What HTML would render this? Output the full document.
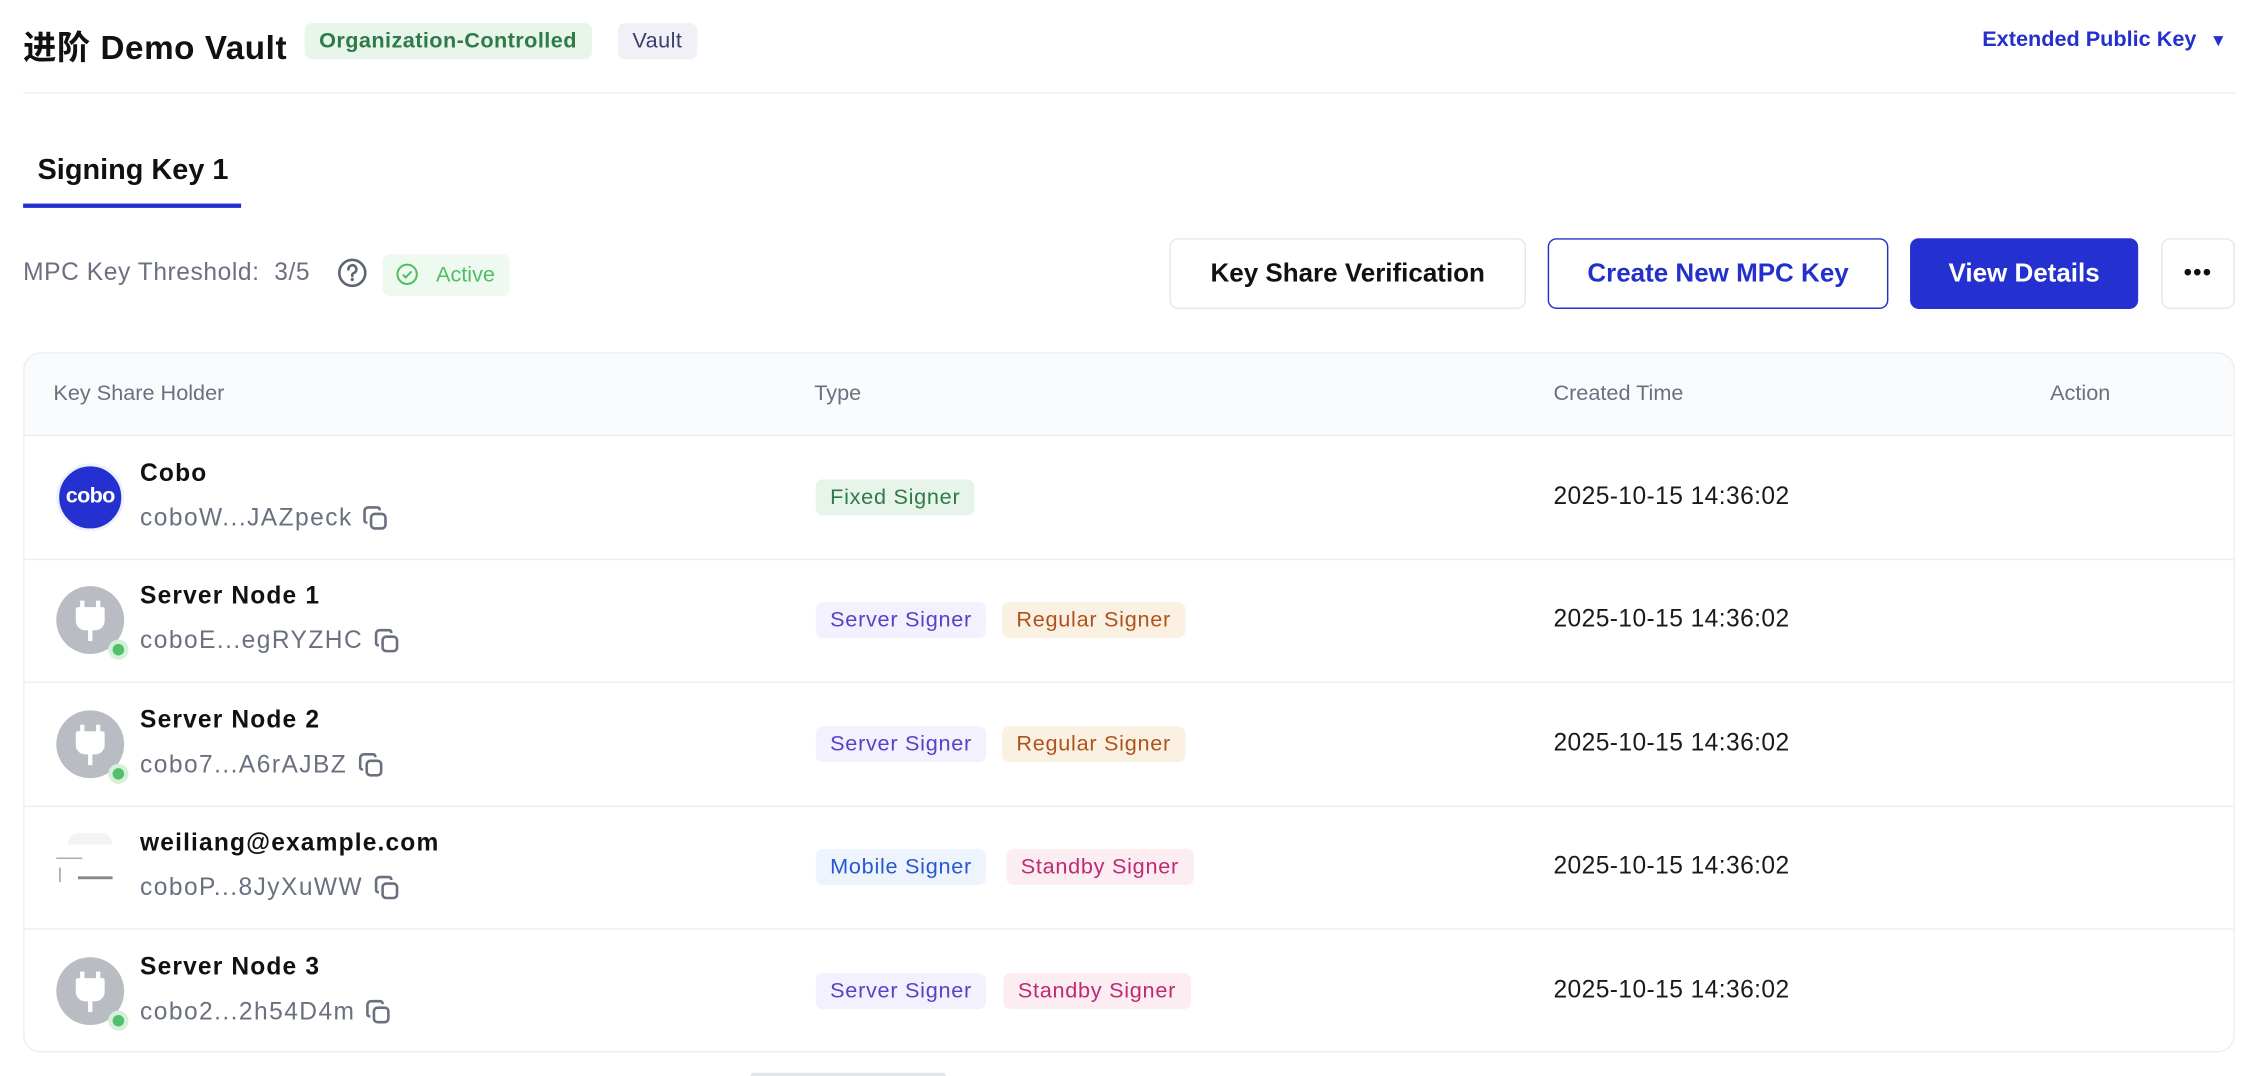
<!DOCTYPE html>
<html><head><meta charset="utf-8"><style>
*{box-sizing:border-box;margin:0;padding:0}
html,body{width:2258px;height:1076px;overflow:hidden;background:#fff}
#w{width:1564px;height:746px;transform:scale(1.44373);transform-origin:0 0;position:relative;font-family:"Liberation Sans","Noto Sans CJK SC",sans-serif;color:#111}
.a{position:absolute}
.badge{position:absolute;height:25px;line-height:25px;border-radius:5px;font-size:15px;font-weight:600;padding:0 10px;letter-spacing:.3px}
.btn{position:absolute;top:165px;height:49px;border-radius:6px;font-size:18px;font-weight:bold;display:flex;align-items:center;justify-content:center;border:1px solid #e6e7ec}
.tbl{position:absolute;left:16px;top:244px;width:1532px;height:485px;border:1px solid #eceef2;border-radius:12px;overflow:hidden}
.hd{position:absolute;left:0;top:0;width:100%;height:57px;background:#fafbfc;border-bottom:1px solid #eceef2;font-size:15px;color:#6b7080}
.hd span{position:absolute;top:19px}
.row{position:absolute;left:0;width:100%;height:86px;border-bottom:1px solid #eceef2}
.av{position:absolute;left:22px;top:19px;width:47px;height:47px;border-radius:50%;background:#b9bcc3}
.dot{position:absolute;left:58px;top:56px;width:14px;height:14px;border-radius:50%;background:#d6f0dc}
.dot:after{content:"";position:absolute;left:3px;top:3px;width:8px;height:8px;border-radius:50%;background:#52c06a}
.nm{position:absolute;left:80px;top:16px;font-size:17px;font-weight:bold;letter-spacing:.8px}
.ad{position:absolute;left:80px;top:47px;font-size:17px;color:#6b7080;letter-spacing:1px;display:flex;align-items:center;gap:6px}
.tg{position:absolute;top:30px;height:25px;line-height:25px;border-radius:5px;font-size:15px;padding:0 10px;letter-spacing:.5px}
.dt{position:absolute;left:1059px;top:32px;font-size:17px;color:#1a1a1a;letter-spacing:.3px}
.ss{background:#f3f1fd;color:#5b3fc7}.rs{background:#fbf1e2;color:#b0521c}.sb{background:#fcedf3;color:#be2a74}.ms{background:#edf4fe;color:#2757d3}.fs{background:#e7f4ea;color:#2e7a48}
</style></head><body><div id="w">
<div class="a" style="left:16px;top:14px;font-size:23px;font-weight:bold;letter-spacing:.4px">进阶 Demo Vault</div>
<div class="badge" style="left:211px;top:16px;background:#e7f5ea;color:#2e7a48">Organization-Controlled</div>
<div class="badge" style="left:428px;top:16px;background:#f0f0f6;color:#383e6e;font-weight:500">Vault</div>
<div class="a" style="left:1373px;top:19px;font-size:15px;font-weight:bold;color:#2430cc">Extended Public Key <span style="font-size:12px;margin-left:5px">▼</span></div>
<div class="a" style="left:16px;top:64px;width:1532px;height:1px;background:#eceef2"></div>
<div class="a" style="left:26px;top:107px;font-size:20px;font-weight:bold">Signing Key 1</div>
<div class="a" style="left:16px;top:141px;width:151px;height:3px;background:#2430d0"></div>
<div class="a" style="left:16px;top:179px;font-size:17px;color:#6b7080;letter-spacing:.4px">MPC Key Threshold:&nbsp; 3/5</div>
<svg class="a" style="left:233px;top:178px" width="22" height="22" viewBox="0 0 22 22"><circle cx="11" cy="11" r="9" fill="none" stroke="#5f6475" stroke-width="1.8"/><path d="M8.3 8.6a2.8 2.8 0 1 1 3.6 2.6c-.6.3-.9.7-.9 1.4v.6" fill="none" stroke="#5f6475" stroke-width="1.8" stroke-linecap="round"/><circle cx="11" cy="15.6" r="1.1" fill="#5f6475"/></svg>
<div class="a" style="left:265px;top:176px;width:88px;height:29px;border-radius:5px;background:#eef9f0;color:#4cbf63;font-size:15px;line-height:29px;padding-left:37px">Active</div>
<svg class="a" style="left:274px;top:182px" width="16" height="16" viewBox="0 0 16 16"><circle cx="8" cy="8" r="6.7" fill="none" stroke="#4cbf63" stroke-width="1.4"/><path d="M5 8.2l2 2 4-4.2" fill="none" stroke="#4cbf63" stroke-width="1.4"/></svg>
<div class="btn" style="left:810px;width:247px;color:#111">Key Share Verification</div>
<div class="btn" style="left:1072px;width:236px;color:#2430cc;border-color:#2430cc">Create New MPC Key</div>
<div class="btn" style="left:1323px;width:158px;color:#fff;background:#2430d0;border-color:#2430d0">View Details</div>
<div class="btn" style="left:1497px;width:51px;color:#111;font-size:16px;letter-spacing:1px">•••</div>
<div class="tbl">
<div class="hd"><span style="left:20px">Key Share Holder</span><span style="left:547px">Type</span><span style="left:1059px">Created Time</span><span style="left:1403px">Action</span></div>
<div class="row" style="top:57px">
<div class="av" style="background:#2431d0;border:2px solid #eef0fa"><span style="position:absolute;left:0;right:0;top:12px;text-align:center;color:#fff;font-weight:bold;font-size:15px;letter-spacing:-.5px">cobo</span></div>
<div class="nm">Cobo</div><div class="ad">coboW...JAZpeck <svg width="20" height="20" viewBox="0 0 20 20"><rect x="7" y="7" width="10" height="10" rx="2.5" fill="none" stroke="#6b7080" stroke-width="1.8"/><path d="M13 4.5V4a1.5 1.5 0 0 0-1.5-1.5H5A2.5 2.5 0 0 0 2.5 5v6.5A1.5 1.5 0 0 0 4 13h.5" fill="none" stroke="#6b7080" stroke-width="1.8"/></svg></div>
<span class="tg fs" style="left:548px">Fixed Signer</span><div class="dt">2025-10-15 14:36:02</div></div>
<div class="row" style="top:142px"><div class="av"><svg width="47" height="47" viewBox="0 0 47 47"><path d="M18 10v6M29 10v6M15 16h17v8a5 5 0 0 1-5 5h-7a5 5 0 0 1-5-5z" fill="#fff" stroke="#fff" stroke-width="3" stroke-linejoin="round"/><path d="M23.5 29v9" stroke="#fff" stroke-width="3"/></svg></div><div class="dot"></div>
<div class="nm">Server Node 1</div><div class="ad">coboE...egRYZHC <svg width="20" height="20" viewBox="0 0 20 20"><rect x="7" y="7" width="10" height="10" rx="2.5" fill="none" stroke="#6b7080" stroke-width="1.8"/><path d="M13 4.5V4a1.5 1.5 0 0 0-1.5-1.5H5A2.5 2.5 0 0 0 2.5 5v6.5A1.5 1.5 0 0 0 4 13h.5" fill="none" stroke="#6b7080" stroke-width="1.8"/></svg></div>
<span class="tg ss" style="left:548px">Server Signer</span><span class="tg rs" style="left:677px">Regular Signer</span><div class="dt">2025-10-15 14:36:02</div></div>
<div class="row" style="top:228px"><div class="av"><svg width="47" height="47" viewBox="0 0 47 47"><path d="M18 10v6M29 10v6M15 16h17v8a5 5 0 0 1-5 5h-7a5 5 0 0 1-5-5z" fill="#fff" stroke="#fff" stroke-width="3" stroke-linejoin="round"/><path d="M23.5 29v9" stroke="#fff" stroke-width="3"/></svg></div><div class="dot"></div>
<div class="nm">Server Node 2</div><div class="ad">cobo7...A6rAJBZ <svg width="20" height="20" viewBox="0 0 20 20"><rect x="7" y="7" width="10" height="10" rx="2.5" fill="none" stroke="#6b7080" stroke-width="1.8"/><path d="M13 4.5V4a1.5 1.5 0 0 0-1.5-1.5H5A2.5 2.5 0 0 0 2.5 5v6.5A1.5 1.5 0 0 0 4 13h.5" fill="none" stroke="#6b7080" stroke-width="1.8"/></svg></div>
<span class="tg ss" style="left:548px">Server Signer</span><span class="tg rs" style="left:677px">Regular Signer</span><div class="dt">2025-10-15 14:36:02</div></div>
<div class="row" style="top:313px"><div class="av" style="background:#fff"><div style="position:absolute;left:8px;top:0;width:31px;height:8px;border-radius:16px 16px 0 0;background:#f3f3f3"></div><div style="position:absolute;left:0;top:17px;width:18px;height:1px;background:#aaa"></div><div style="position:absolute;left:15px;top:30px;width:24px;height:2px;background:#888"></div><div style="position:absolute;left:2px;top:24px;width:1px;height:10px;background:#999"></div></div>
<div class="nm">weiliang@example.com</div><div class="ad">coboP...8JyXuWW <svg width="20" height="20" viewBox="0 0 20 20"><rect x="7" y="7" width="10" height="10" rx="2.5" fill="none" stroke="#6b7080" stroke-width="1.8"/><path d="M13 4.5V4a1.5 1.5 0 0 0-1.5-1.5H5A2.5 2.5 0 0 0 2.5 5v6.5A1.5 1.5 0 0 0 4 13h.5" fill="none" stroke="#6b7080" stroke-width="1.8"/></svg></div>
<span class="tg ms" style="left:548px">Mobile Signer</span><span class="tg sb" style="left:680px">Standby Signer</span><div class="dt">2025-10-15 14:36:02</div></div>
<div class="row" style="top:399px;border-bottom:none"><div class="av"><svg width="47" height="47" viewBox="0 0 47 47"><path d="M18 10v6M29 10v6M15 16h17v8a5 5 0 0 1-5 5h-7a5 5 0 0 1-5-5z" fill="#fff" stroke="#fff" stroke-width="3" stroke-linejoin="round"/><path d="M23.5 29v9" stroke="#fff" stroke-width="3"/></svg></div><div class="dot"></div>
<div class="nm">Server Node 3</div><div class="ad">cobo2...2h54D4m <svg width="20" height="20" viewBox="0 0 20 20"><rect x="7" y="7" width="10" height="10" rx="2.5" fill="none" stroke="#6b7080" stroke-width="1.8"/><path d="M13 4.5V4a1.5 1.5 0 0 0-1.5-1.5H5A2.5 2.5 0 0 0 2.5 5v6.5A1.5 1.5 0 0 0 4 13h.5" fill="none" stroke="#6b7080" stroke-width="1.8"/></svg></div>
<span class="tg ss" style="left:548px">Server Signer</span><span class="tg sb" style="left:678px">Standby Signer</span><div class="dt">2025-10-15 14:36:02</div></div>
</div>
<div class="a" style="left:520px;top:743px;width:135px;height:4px;border-radius:3px;background:#e4e5e8"></div>
</div></body></html>
